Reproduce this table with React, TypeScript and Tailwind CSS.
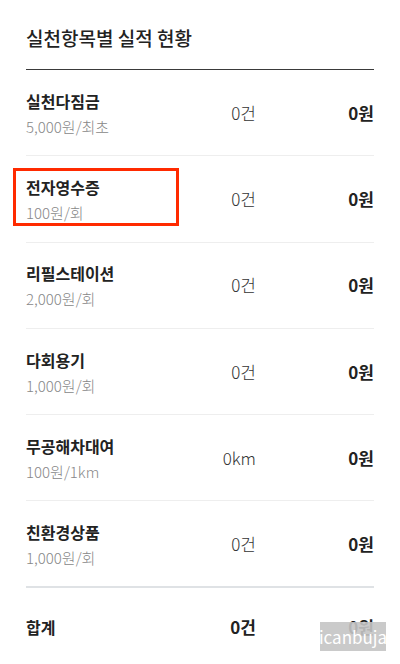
const rows = [
  { name: '실천다짐금', unit: '5,000원/최초', count: '0건', amount: '0원' },
  { name: '전자영수증', unit: '100원/회', count: '0건', amount: '0원' },
  { name: '리필스테이션', unit: '2,000원/회', count: '0건', amount: '0원' },
  { name: '다회용기', unit: '1,000원/회', count: '0건', amount: '0원' },
  { name: '무공해차대여', unit: '100원/1km', count: '0km', amount: '0원' },
  { name: '친환경상품', unit: '1,000원/회', count: '0건', amount: '0원' },
]

export default function App() {
  return (
    <div
      className="relative h-[664px] w-[400px] overflow-hidden bg-white text-[#222]"
      style={{ fontFamily: '"Noto Sans CJK KR", "Noto Sans", sans-serif' }}
    >
      <div className="px-[26px]">
        <h1 className="pt-[25px] text-[19px] font-medium leading-[26px] text-[#222]">실천항목별 실적 현황</h1>
        <div className="mt-[18px] border-t border-[#3a3a3a]" />
        {rows.map((row, i) => (
          <div
            key={row.name}
            className={`flex h-[86.3px] items-center ${i === rows.length - 1 ? 'border-b-2 border-[#dfe2e5]' : 'border-b border-[#eeeeee]'}`}
          >
            <div className="flex-1">
              <p className="text-[16px] font-bold leading-[22px] text-[#222]">{row.name}</p>
              <p className="mt-[5px] text-[15px] font-light leading-[19px] text-[#888]">{row.unit}</p>
            </div>
            <span className="w-[70px] text-right text-[17px] font-light text-[#333]">{row.count}</span>
            <span className="w-[118px] text-right text-[17px] font-bold text-[#222]">{row.amount}</span>
          </div>
        ))}
        <div className="flex h-[78px] items-center">
          <p className="flex-1 text-[16px] font-bold text-[#222]">합계</p>
          <span className="w-[70px] text-right text-[17px] font-bold text-[#222]">0건</span>
          <span className="w-[118px] text-right text-[17px] font-bold text-[#222]">0원</span>
        </div>
      </div>

      <div className="absolute left-[13px] top-[168px] h-[58px] w-[166px] border-[3px] border-[#ff2a00]" />
      <div className="absolute left-[320px] top-[622px] flex h-[29px] w-[66px] items-center justify-center bg-[#c4c4c4]/90 text-[17px] leading-none text-white">
        icanbuja
      </div>
    </div>
  )
}
